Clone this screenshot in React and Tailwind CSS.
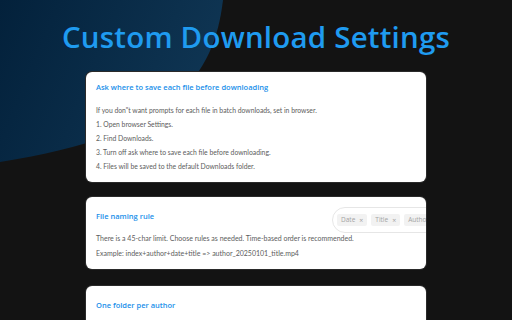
import React from 'react'

const Chip = ({ label }) => (
  <div className="flex items-center gap-[4px] h-[12px] px-[4px] rounded-[2px] bg-[#f2f2f2] text-[6.5px] text-[#a3a3a3] leading-none shrink-0">
    <span>{label}</span>
    <span className="text-[7px]">×</span>
  </div>
)

const App = () => {
  return (
    <div className="relative w-[512px] h-[320px] overflow-hidden bg-[#131313] font-['Open_Sans',sans-serif]">
      <svg className="absolute left-0 top-0" width="240" height="170" viewBox="0 0 240 170">
        <defs>
          <linearGradient id="blob" x1="0" y1="0" x2="1" y2="0.3">
            <stop offset="0" stopColor="#03213b" />
            <stop offset="1" stopColor="#0f3553" />
          </linearGradient>
        </defs>
        <path d="M0 0 H223 C214 75 175 135 0 162 Z" fill="url(#blob)" />
      </svg>

      <div className="relative flex flex-col items-center">
        <h1 className="mt-[19px] h-[36px] leading-[36px] text-[29.5px] font-semibold text-[#1f9bf0] tracking-[0.2px]">
          Custom Download Settings
        </h1>

        <div className="mt-[17px] w-[340px] h-[110px] rounded-[6px] bg-white shadow-[0_0_0_1px_#2a2a2a] px-[10px] pt-[8px]">
          <div className="leading-[14px] text-[7.5px] font-semibold text-[#1a90ea]">
            Ask where to save each file before downloading
          </div>
          <div className="mt-[9px] font-['Lato',sans-serif] text-[6.8px] leading-[14px] text-[#5c5c5c]">
            <p>If you don"t want prompts for each file in batch downloads, set in browser.</p>
            <p>1. Open browser Settings.</p>
            <p>2. Find Downloads.</p>
            <p>3. Turn off ask where to save each file before downloading.</p>
            <p>4. Files will be saved to the default Downloads folder.</p>
          </div>
        </div>

        <div className="mt-[15px] w-[340px] h-[72px] rounded-[6px] bg-white shadow-[0_0_0_1px_#2a2a2a] px-[10px] pt-[10px] overflow-hidden">
          <div className="flex items-start justify-between">
            <div className="mt-[2px] leading-[14px] text-[7.5px] font-semibold text-[#1a90ea]">
              File naming rule
            </div>
            <div className="w-[94px] -mr-[10px] overflow-hidden shrink-0">
              <div className="w-[130px] h-[26px] rounded-full border border-[#e6e6e6] flex items-center gap-[4px] pl-[4px]">
                <Chip label="Date" />
                <Chip label="Title" />
                <Chip label="Author" />
              </div>
            </div>
          </div>
          <div className="-mt-[2px] font-['Lato',sans-serif] text-[7px] leading-[15px] text-[#5c5c5c]">
            <p>There is a 45-char limit. Choose rules as needed. Time-based order is recommended.</p>
            <p>Example: index+author+date+title =&gt; author_20250101_title.mp4</p>
          </div>
        </div>

        <div className="mt-[17px] w-[340px] h-[60px] rounded-[6px] bg-white shadow-[0_0_0_1px_#2a2a2a] px-[10px] pt-[12px]">
          <div className="leading-[14px] text-[7.5px] font-semibold text-[#1a90ea]">
            One folder per author
          </div>
        </div>
      </div>
    </div>
  )
}

export default App
